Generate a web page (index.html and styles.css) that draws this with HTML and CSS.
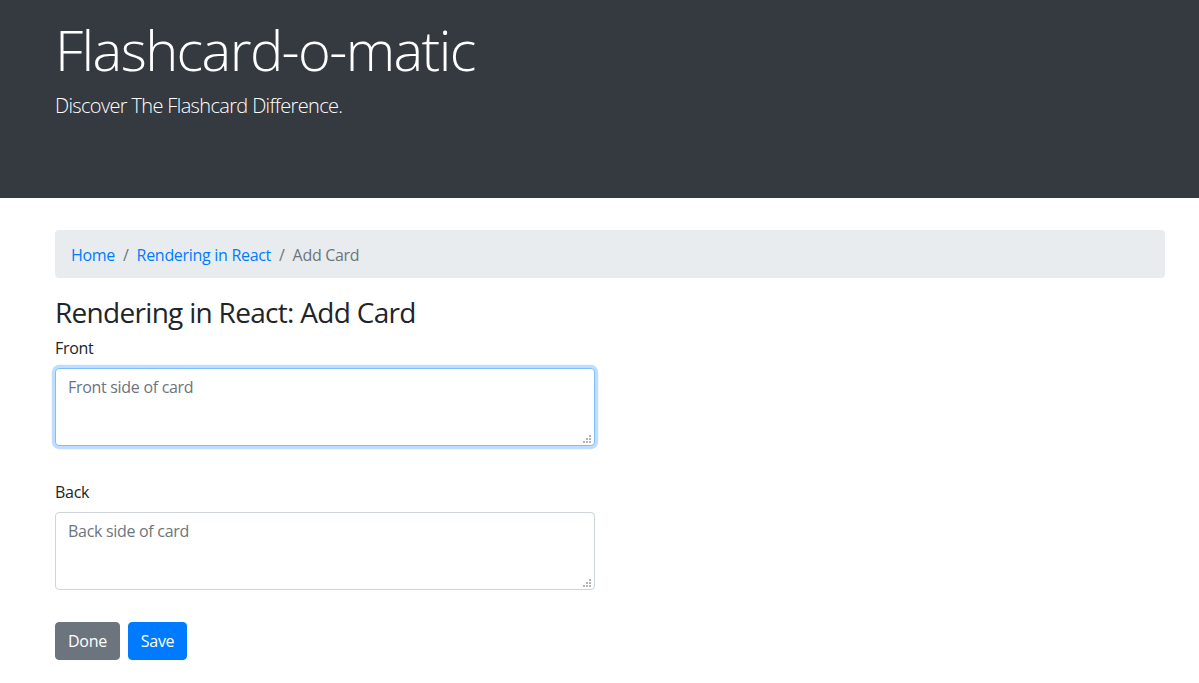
FILE: index.html
```html
<!DOCTYPE html>
<html lang="en">
<head>
<meta charset="utf-8">
<title>Flashcard-o-matic</title>
<link rel="stylesheet" href="styles.css">
</head>
<body>
<header class="jumbotron">
  <div class="container">
    <h1 class="display">Flashcard-o-matic</h1>
    <p class="lead">Discover The Flashcard Difference.</p>
  </div>
</header>
<main class="container">
  <nav class="breadcrumb">
    <a href="#" class="crumb">Home</a>
    <span class="sep">/</span>
    <a href="#" class="crumb">Rendering in React</a>
    <span class="sep">/</span>
    <span class="crumb active">Add Card</span>
  </nav>
  <h3 class="title">Rendering in React: Add Card</h3>
  <form class="card-form">
    <div class="form-group">
      <label for="front">Front</label>
      <div class="field">
        <textarea id="front" class="form-control focused" placeholder="Front side of card"></textarea>
        <svg class="grip" width="8" height="8" viewBox="0 0 8 8" aria-hidden="true"><g fill="#b4b4b4"><rect x="6" y="0" width="2" height="2"/><rect x="3" y="3" width="2" height="2"/><rect x="6" y="3" width="2" height="2"/><rect x="0" y="6" width="2" height="2"/><rect x="3" y="6" width="2" height="2"/><rect x="6" y="6" width="2" height="2"/></g></svg>
      </div>
    </div>
    <div class="form-group last">
      <label for="back">Back</label>
      <div class="field">
        <textarea id="back" class="form-control" placeholder="Back side of card"></textarea>
        <svg class="grip" width="8" height="8" viewBox="0 0 8 8" aria-hidden="true"><g fill="#b4b4b4"><rect x="6" y="0" width="2" height="2"/><rect x="3" y="3" width="2" height="2"/><rect x="6" y="3" width="2" height="2"/><rect x="0" y="6" width="2" height="2"/><rect x="3" y="6" width="2" height="2"/><rect x="6" y="6" width="2" height="2"/></g></svg>
      </div>
    </div>
    <div class="actions">
      <button type="button" class="btn btn-secondary">Done</button>
      <button type="submit" class="btn btn-primary">Save</button>
    </div>
  </form>
</main>
</body>
</html>
```

FILE: styles.css
```css
* { box-sizing: border-box; }
html, body { margin: 0; padding: 0; }
body {
  font-family: "Open Sans", "Noto Sans", Arial, sans-serif;
  font-size: 16px;
  line-height: 1.5;
  color: #212529;
  background: #fff;
  letter-spacing: -0.3px;
}
.container {
  width: 1110px;
  margin-left: 55px;
}
.jumbotron {
  background: #343a40;
  color: #fff;
  height: 198px;
  padding-top: 16px;
  margin-bottom: 32px;
}
.display {
  margin: 0 0 8px;
  font-size: 56px;
  font-weight: 300;
  line-height: 1.2;
  letter-spacing: -1.6px;
}
.lead {
  margin: 0;
  font-size: 20px;
  font-weight: 300;
  line-height: 30px;
  letter-spacing: -0.65px;
}
.breadcrumb {
  display: flex;
  align-items: center;
  background: #e9ecef;
  border-radius: 4px;
  padding: 13px 16px 11px;
  margin-bottom: 16px;
  line-height: 24px;
}
.crumb { color: #007bff; text-decoration: none; }
.crumb.active { color: #6c757d; }
.sep { color: #6c757d; padding: 0 8px; }
.title {
  margin: 0 0 6px;
  padding-top: 2px;
  font-size: 28px;
  font-weight: 400;
  line-height: 1.2;
  letter-spacing: -0.7px;
}
.card-form { width: 540px; }
.form-group { margin-bottom: 34px; }
.form-group.last { margin-bottom: 32px; }
label { display: inline-block; margin-bottom: 8px; }
.field { position: relative; }
.form-control {
  display: block;
  width: 100%;
  height: 78px;
  padding: 6px 12px;
  font-family: inherit;
  font-size: 16px;
  line-height: 1.5;
  letter-spacing: -0.3px;
  color: #495057;
  background: #fff;
  border: 1px solid #ced4da;
  border-radius: 4px;
  outline: none;
  resize: none;
}
.form-control::placeholder { color: #6c757d; opacity: 1; }
.form-control.focused {
  border-color: #80bdff;
  box-shadow: 0 0 0 3.2px rgba(0, 123, 255, .25);
}
.grip {
  position: absolute;
  right: 4px;
  bottom: 3px;
}
.actions { display: flex; gap: 8px; }
.btn {
  font-family: inherit;
  font-size: 16px;
  line-height: 1.5;
  letter-spacing: -0.3px;
  padding: 6px 12px;
  border: 1px solid transparent;
  border-radius: 4px;
  color: #fff;
  cursor: pointer;
}
.btn-secondary { background: #6c757d; border-color: #6c757d; }
.btn-primary { background: #007bff; border-color: #007bff; }
```
